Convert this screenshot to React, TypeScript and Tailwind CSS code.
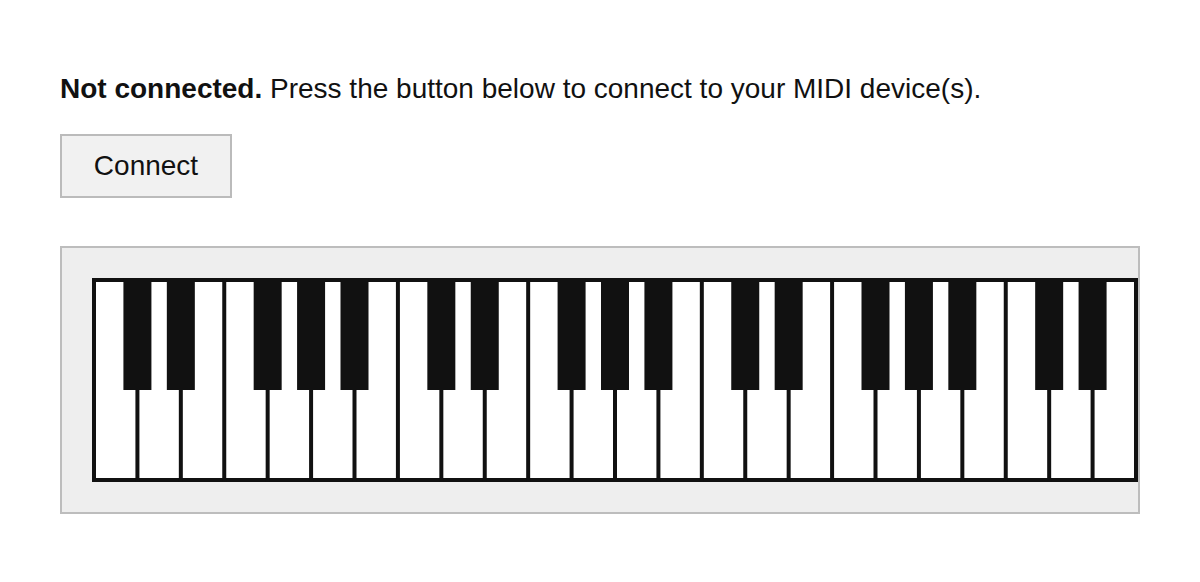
import React from "react";

const WHITE_COUNT = 24;
const KB_W = 1046;
const KB_H = 204;
const STROKE = 4;
const PITCH = (KB_W - STROKE) / WHITE_COUNT;

// black keys sit on the boundary after these white keys (C D F G A within an octave)
const BLACK_AFTER = [0, 1, 3, 4, 5];

function Keyboard() {
    const lines: number[] = [];
    for (let i = 1; i < WHITE_COUNT; i++) lines.push(STROKE / 2 + PITCH * i);

    const blacks: number[] = [];
    for (let i = 0; i < WHITE_COUNT - 1; i++) {
        if (BLACK_AFTER.includes(i % 7)) blacks.push(STROKE / 2 + PITCH * (i + 1));
    }

    return (
        <svg width={KB_W} height={KB_H} viewBox={`0 0 ${KB_W} ${KB_H}`} className="block shrink-0">
            <rect x={STROKE / 2} y={STROKE / 2} width={KB_W - STROKE} height={KB_H - STROKE} fill="#ffffff" stroke="#111111" strokeWidth={STROKE} />
            {lines.map((x) => (
                <line key={x} x1={x} y1={0} x2={x} y2={KB_H} stroke="#111111" strokeWidth={STROKE} />
            ))}
            {blacks.map((x) => (
                <rect key={x} x={x - 14} y={0} width={28} height={112} fill="#111111" />
            ))}
        </svg>
    );
}

export default function App() {
    return (
        <div className="w-[1200px] h-[582px] bg-white px-[60px] pt-[73px] text-[#111] font-['Liberation_Sans',Arial,sans-serif]">
            <p className="text-[28px] leading-[32px]">
                <strong className="font-bold">Not connected.</strong> Press the button below to connect to your MIDI device(s).
            </p>
            <button className="mt-[29px] w-[172px] h-[64px] border-2 border-[#bbbbbb] bg-[#f1f1f1] text-[28px] leading-[32px] text-[#111]">
                Connect
            </button>
            <div className="mt-[48px] w-[1080px] h-[268px] border-2 border-[#bdbdbd] bg-[#eeeeee] p-[30px] flex">
                <Keyboard />
            </div>
        </div>
    );
}
